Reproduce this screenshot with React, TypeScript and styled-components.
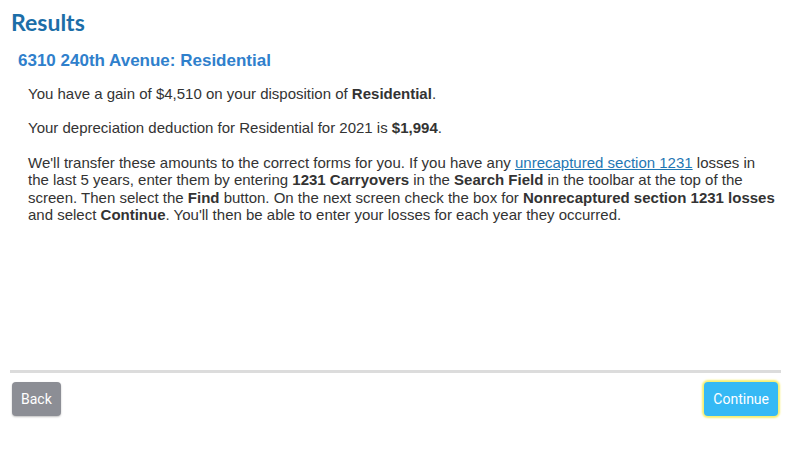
import React from 'react';
import styled, { createGlobalStyle } from 'styled-components';

const GlobalStyle = createGlobalStyle`
  body {
    margin: 0;
    background: #fff;
    font-family: "Liberation Sans", Arial, sans-serif;
  }
`;

const Page = styled.div`
  width: 811px;
  height: 452px;
  display: flex;
  flex-direction: column;
  box-sizing: border-box;
  padding: 0 30px 0 10px;
`;

const Title = styled.h1`
  margin: 8px 0 0 1px;
  font-family: Lato, "Open Sans", sans-serif;
  font-weight: 700;
  font-size: 23px;
  line-height: 28px;
  color: #1c6ea8;
`;

const Subtitle = styled.h2`
  margin: 15px 0 0 8px;
  font-size: 17px;
  line-height: 20px;
  font-weight: 700;
  color: #2f80cc;
`;

const Body = styled.div`
  flex: 1;
  padding: 14px 4px 0 18px;
  font-size: 15px;
  line-height: 17.4px;
  color: #333;
`;

const Para = styled.p`
  margin: 0 0 17px;
`;

const Link = styled.a`
  color: #1f77b4;
  text-decoration: underline;
`;

const Divider = styled.hr`
  margin: 0 0 9px;
  border: none;
  height: 3px;
  background: #dcdcdc;
`;

const Footer = styled.div`
  display: flex;
  justify-content: space-between;
  padding: 0 3px 0 2px;
  margin-bottom: 36px;
`;

const Button = styled.button<{ $primary?: boolean }>`
  height: 34px;
  padding: 0 9px;
  border: none;
  border-radius: 4px;
  font-family: Roboto, "Liberation Sans", sans-serif;
  font-size: 14px;
  color: #fff;
  background: ${(p) => (p.$primary ? '#35b9f5' : '#8c8e95')};
  box-shadow: ${(p) =>
    p.$primary ? '0 0 2px 2px #f6ef6e' : '0 1px 2px rgba(0,0,0,0.25)'};
  cursor: pointer;
`;

export default function App() {
  return (
    <>
      <GlobalStyle />
      <Page>
        <Title>Results</Title>
        <Subtitle>6310 240th Avenue: Residential</Subtitle>
        <Body>
          <Para>
            You have a gain of $4,510 on your disposition of <b>Residential</b>.
          </Para>
          <Para>
            Your depreciation deduction for Residential for 2021 is <b>$1,994</b>.
          </Para>
          <Para>
            We'll transfer these amounts to the correct forms for you. If you have any{' '}
            <Link href="#">unrecaptured section 1231</Link> losses in the last 5 years, enter
            them by entering <b>1231 Carryovers</b> in the <b>Search Field</b> in the toolbar at
            the top of the screen. Then select the <b>Find</b> button. On the next screen check
            the box for <b>Nonrecaptured section 1231 losses</b> and select <b>Continue</b>.
            You'll then be able to enter your losses for each year they occurred.
          </Para>
        </Body>
        <Divider />
        <Footer>
          <Button>Back</Button>
          <Button $primary>Continue</Button>
        </Footer>
      </Page>
    </>
  );
}
